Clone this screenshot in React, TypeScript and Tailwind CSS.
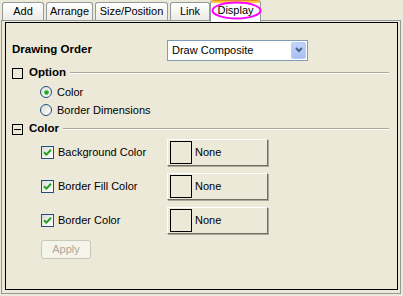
import React from 'react'

const font = { fontFamily: '"Liberation Sans", Arial, sans-serif' }

function Tab({ label, w, active }: { label: string; w: string; active?: boolean }) {
  if (active) {
    return (
      <div className={`relative z-10 -mb-[2px] h-[22px] ${w} flex flex-col rounded-t-[3px] border-x border-[#919B9C] bg-white`}>
        <div className="h-[3px] rounded-t-[3px] bg-[#FFC83C] border-t border-[#E68B2C]" />
        <div className="flex-1 flex items-start justify-center leading-[14px] text-[11px] text-black">{label}</div>
        {/* highlight ring drawn over the tab */}
        <svg className="absolute left-[0px] top-[1px]" width="51" height="19" viewBox="0 0 51 19">
          <ellipse cx="25.5" cy="9.5" rx="24" ry="8" fill="none" stroke="#FF00FF" strokeWidth="2" />
        </svg>
      </div>
    )
  }
  return (
    <div className={`h-[18px] ${w} flex items-center justify-center rounded-t-[3px] border border-b-0 border-[#919B9C] bg-gradient-to-b from-white to-[#ECEBE6] text-[11px] text-black`}>
      {label}
    </div>
  )
}

function GroupHeader({ label, minus }: { label: string; minus?: boolean }) {
  return (
    <div className="flex items-center h-[14px]">
      {minus ? (
        <div className="w-[11px] h-[11px] border border-black flex items-center justify-center">
          <div className="w-[7px] h-[1px] bg-black" />
        </div>
      ) : (
        <div className="w-[11px] h-[11px] border-[1.5px] border-black" />
      )}
      <span className="ml-[6px] font-bold text-[11.5px] text-black">{label}</span>
      <div className="ml-[4px] flex-1 mr-[8px] flex flex-col">
        <div className="h-px bg-[#ACA899]" />
        <div className="h-px bg-white" />
      </div>
    </div>
  )
}

function Radio({ label, checked }: { label: string; checked?: boolean }) {
  return (
    <div className="flex items-center h-[18px] pl-[28px]">
      <div className="w-[12px] h-[12px] rounded-full border border-[#1C5180] bg-gradient-to-br from-[#DCDCD7] to-white flex items-center justify-center">
        {checked && <div className="w-[5px] h-[5px] rounded-full bg-[#21A121] border border-[#4CC14C]" />}
      </div>
      <span className="ml-[5px] text-[11px] text-black">{label}</span>
    </div>
  )
}

function ColorRow({ label }: { label: string }) {
  return (
    <div className="flex items-center h-[27px]">
      <div className="w-[138px] flex items-center pl-[29px]">
        <div className="w-[13px] h-[13px] border border-[#1C5180] bg-gradient-to-br from-[#DCDCD7] to-white flex items-center justify-center">
          <svg width="9" height="9" viewBox="0 0 9 9">
            <path d="M1 4.2 L3.4 6.6 L8 1.8" fill="none" stroke="#21A121" strokeWidth="2" />
          </svg>
        </div>
        <span className="ml-[4px] text-[11px] text-black whitespace-nowrap">{label}</span>
      </div>
      <div className="ml-[17px] w-[101px] h-[27px] flex items-center pl-[2px] border border-t-white border-l-white border-r-[#716F64] border-b-[#716F64] bg-[#ECE9D8] shadow-[1px_1px_0_#ACA899]">
        <div className="w-[22px] h-[23px] border border-black" />
        <span className="ml-[3px] text-[11px] text-black">None</span>
      </div>
    </div>
  )
}

export default function App() {
  return (
    <div className="w-[403px] h-[296px] bg-[#ECE9D8] flex flex-col overflow-hidden" style={font}>
      <div className="h-[20px] flex items-end pl-[2px]">
        <Tab label="Add" w="w-[42px]" />
        <div className="w-[2px]" />
        <Tab label="Arrange" w="w-[47px]" />
        <div className="w-[2px]" />
        <Tab label="Size/Position" w="w-[73px]" />
        <div className="w-[2px]" />
        <Tab label="Link" w="w-[40px]" />
        <Tab label="Display" w="w-[51px]" active />
      </div>
      <div className="ml-[1px] w-[400px] h-[274px] border border-[#919B9C] pt-[1px] pl-[3px] pr-[2px] pb-[3px] flex">
        <div className="flex-1 border border-black flex flex-col pl-[6px]">
          <div className="flex items-center h-[20px] mt-[17px]">
            <span className="w-[155px] font-bold text-[11.5px] text-black">Drawing Order</span>
            <div className="w-[141px] h-[21px] border border-[#7F9DB9] bg-white flex items-center">
              <span className="flex-1 pl-[4px] text-[11px] text-black">Draw Composite</span>
              <div className="w-[15px] h-[17px] mr-[1px] rounded-[2px] bg-gradient-to-b from-[#C1D3FB] to-[#A8C0F0] border border-[#B9CCF5] flex items-center justify-center">
                <svg width="8" height="6" viewBox="0 0 8 6">
                  <path d="M1 1 L4 4 L7 1" fill="none" stroke="#4D6185" strokeWidth="2" />
                </svg>
              </div>
            </div>
          </div>
          <div className="mt-[6px]">
            <GroupHeader label="Option" />
          </div>
          <div className="mt-[3px]">
            <Radio label="Color" checked />
            <Radio label="Border Dimensions" />
          </div>
          <div className="mt-[3px]">
            <GroupHeader label="Color" minus />
          </div>
          <div className="mt-[3px] flex flex-col gap-[7px]">
            <ColorRow label="Background Color" />
            <ColorRow label="Border Fill Color" />
            <ColorRow label="Border Color" />
          </div>
          <div className="mt-[6px] ml-[29px] w-[50px] h-[19px] rounded-[3px] border border-[#C9C7BA] bg-[#F5F4EA] flex items-center justify-center text-[11px] text-[#ACA899]">
            Apply
          </div>
        </div>
      </div>
    </div>
  )
}
